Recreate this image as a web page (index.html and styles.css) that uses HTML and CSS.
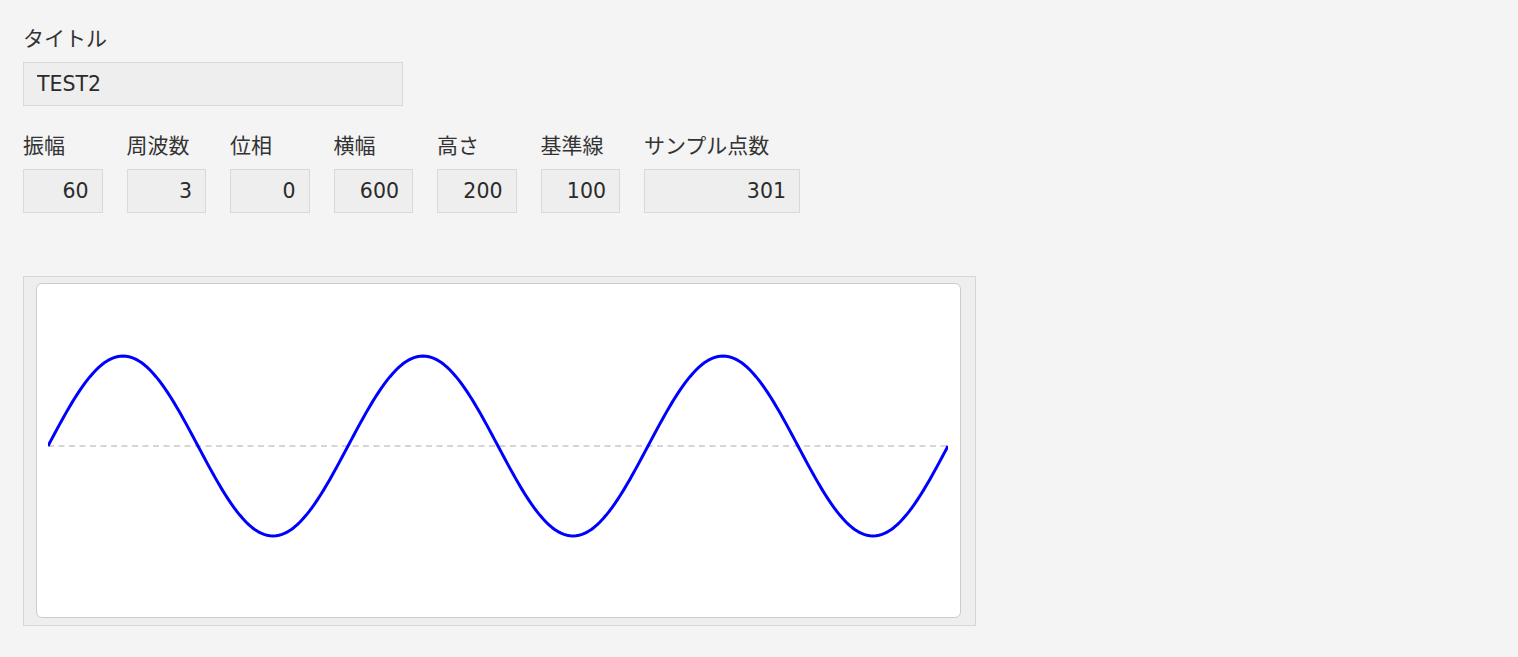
FILE: index.html
```html
<!DOCTYPE html>
<html lang="ja">
<head>
  <meta charset="UTF-8">
  <title>正弦波</title>
  <link rel="stylesheet" href="styles.css">
</head>
<body>
  <div class="field title-field">
    <label for="title">タイトル</label>
    <input type="text" id="title" value="TEST2">
  </div>

  <div class="params">
    <div class="field"><label for="amp">振幅</label><input type="number" id="amp" value="60"></div>
    <div class="field"><label for="freq">周波数</label><input type="number" id="freq" value="3"></div>
    <div class="field"><label for="phase">位相</label><input type="number" id="phase" value="0"></div>
    <div class="field"><label for="width">横幅</label><input type="number" id="width" value="600"></div>
    <div class="field"><label for="height">高さ</label><input type="number" id="height" value="200"></div>
    <div class="field"><label for="base">基準線</label><input type="number" id="base" value="100"></div>
    <div class="field wide"><label for="samples">サンプル点数</label><input type="number" id="samples" value="301"></div>
  </div>

  <div class="chart">
    <div class="chart-inner">
      <svg id="plot" width="900" height="300" viewBox="0 0 600 200">
        <line id="baseLine" x1="0" y1="100" x2="600" y2="100" class="base-line"></line>
        <path id="wave" class="wave" d=""></path>
      </svg>
    </div>
  </div>

  <script>
    // 波形を描く
    function draw() {
      const amp = parseFloat(document.getElementById('amp').value);
      const freq = parseFloat(document.getElementById('freq').value);
      const phase = parseFloat(document.getElementById('phase').value);
      const w = parseFloat(document.getElementById('width').value);
      const h = parseFloat(document.getElementById('height').value);
      const base = parseFloat(document.getElementById('base').value);
      const n = parseInt(document.getElementById('samples').value, 10);

      const svg = document.getElementById('plot');
      svg.setAttribute('viewBox', `0 0 ${w} ${h}`);
      svg.setAttribute('width', w * 1.5);
      svg.setAttribute('height', h * 1.5);

      const line = document.getElementById('baseLine');
      line.setAttribute('y1', base);
      line.setAttribute('y2', base);
      line.setAttribute('x2', w);

      let d = '';
      for (let i = 0; i < n; i++) {
        const x = w * i / (n - 1);
        const y = base - amp * Math.sin(2 * Math.PI * freq * x / w + phase * Math.PI / 180);
        d += (i === 0 ? 'M' : 'L') + x.toFixed(2) + ' ' + y.toFixed(2) + ' ';
      }
      document.getElementById('wave').setAttribute('d', d);
    }

    document.querySelectorAll('input').forEach(el => el.addEventListener('input', draw));
    draw();
  </script>
</body>
</html>
```

FILE: styles.css
```css
/* Base */
* { box-sizing: border-box; }
body { margin: 0; padding: 23px 23px; background: #f4f4f4; color: #333333; font-family: 'Noto Sans CJK JP', 'Noto Sans', sans-serif; font-size: 21px; }

/* Fields */
.field label { display: block; height: 28px; line-height: 28px; margin-bottom: 11px; }
.field input { display: block; width: 79.5px; height: 44px; padding: 0 13px; border: 1px solid #d9d9d9; background: #eeeeee; color: #2b2b2b; font-family: 'DejaVu Sans', 'Noto Sans CJK JP', sans-serif; font-size: 20.5px; text-align: right; -moz-appearance: textfield; }
.field input::-webkit-inner-spin-button, .field input::-webkit-outer-spin-button { -webkit-appearance: none; margin: 0; }
.field input:focus { outline: none; border-color: #b5b5b5; }

.title-field input { width: 380px; text-align: left; }

.params { display: flex; gap: 24px; margin-top: 24px; }
.params .wide input { width: 156px; }

/* Chart */
.chart { width: 953px; margin-top: 63px; padding: 6px 14px 7px 12px; background: #eeeeee; border: 1px solid #d6d6d6; }
.chart-inner { padding: 12px 12px 21px 11px; background: #ffffff; border: 1px solid #cccccc; border-radius: 6px; }
.chart-inner svg { display: block; }
.base-line { stroke: #c8c8c8; stroke-width: 1; stroke-dasharray: 4 3; }
.wave { fill: none; stroke: #0000ff; stroke-width: 2; stroke-linejoin: round; }
```
